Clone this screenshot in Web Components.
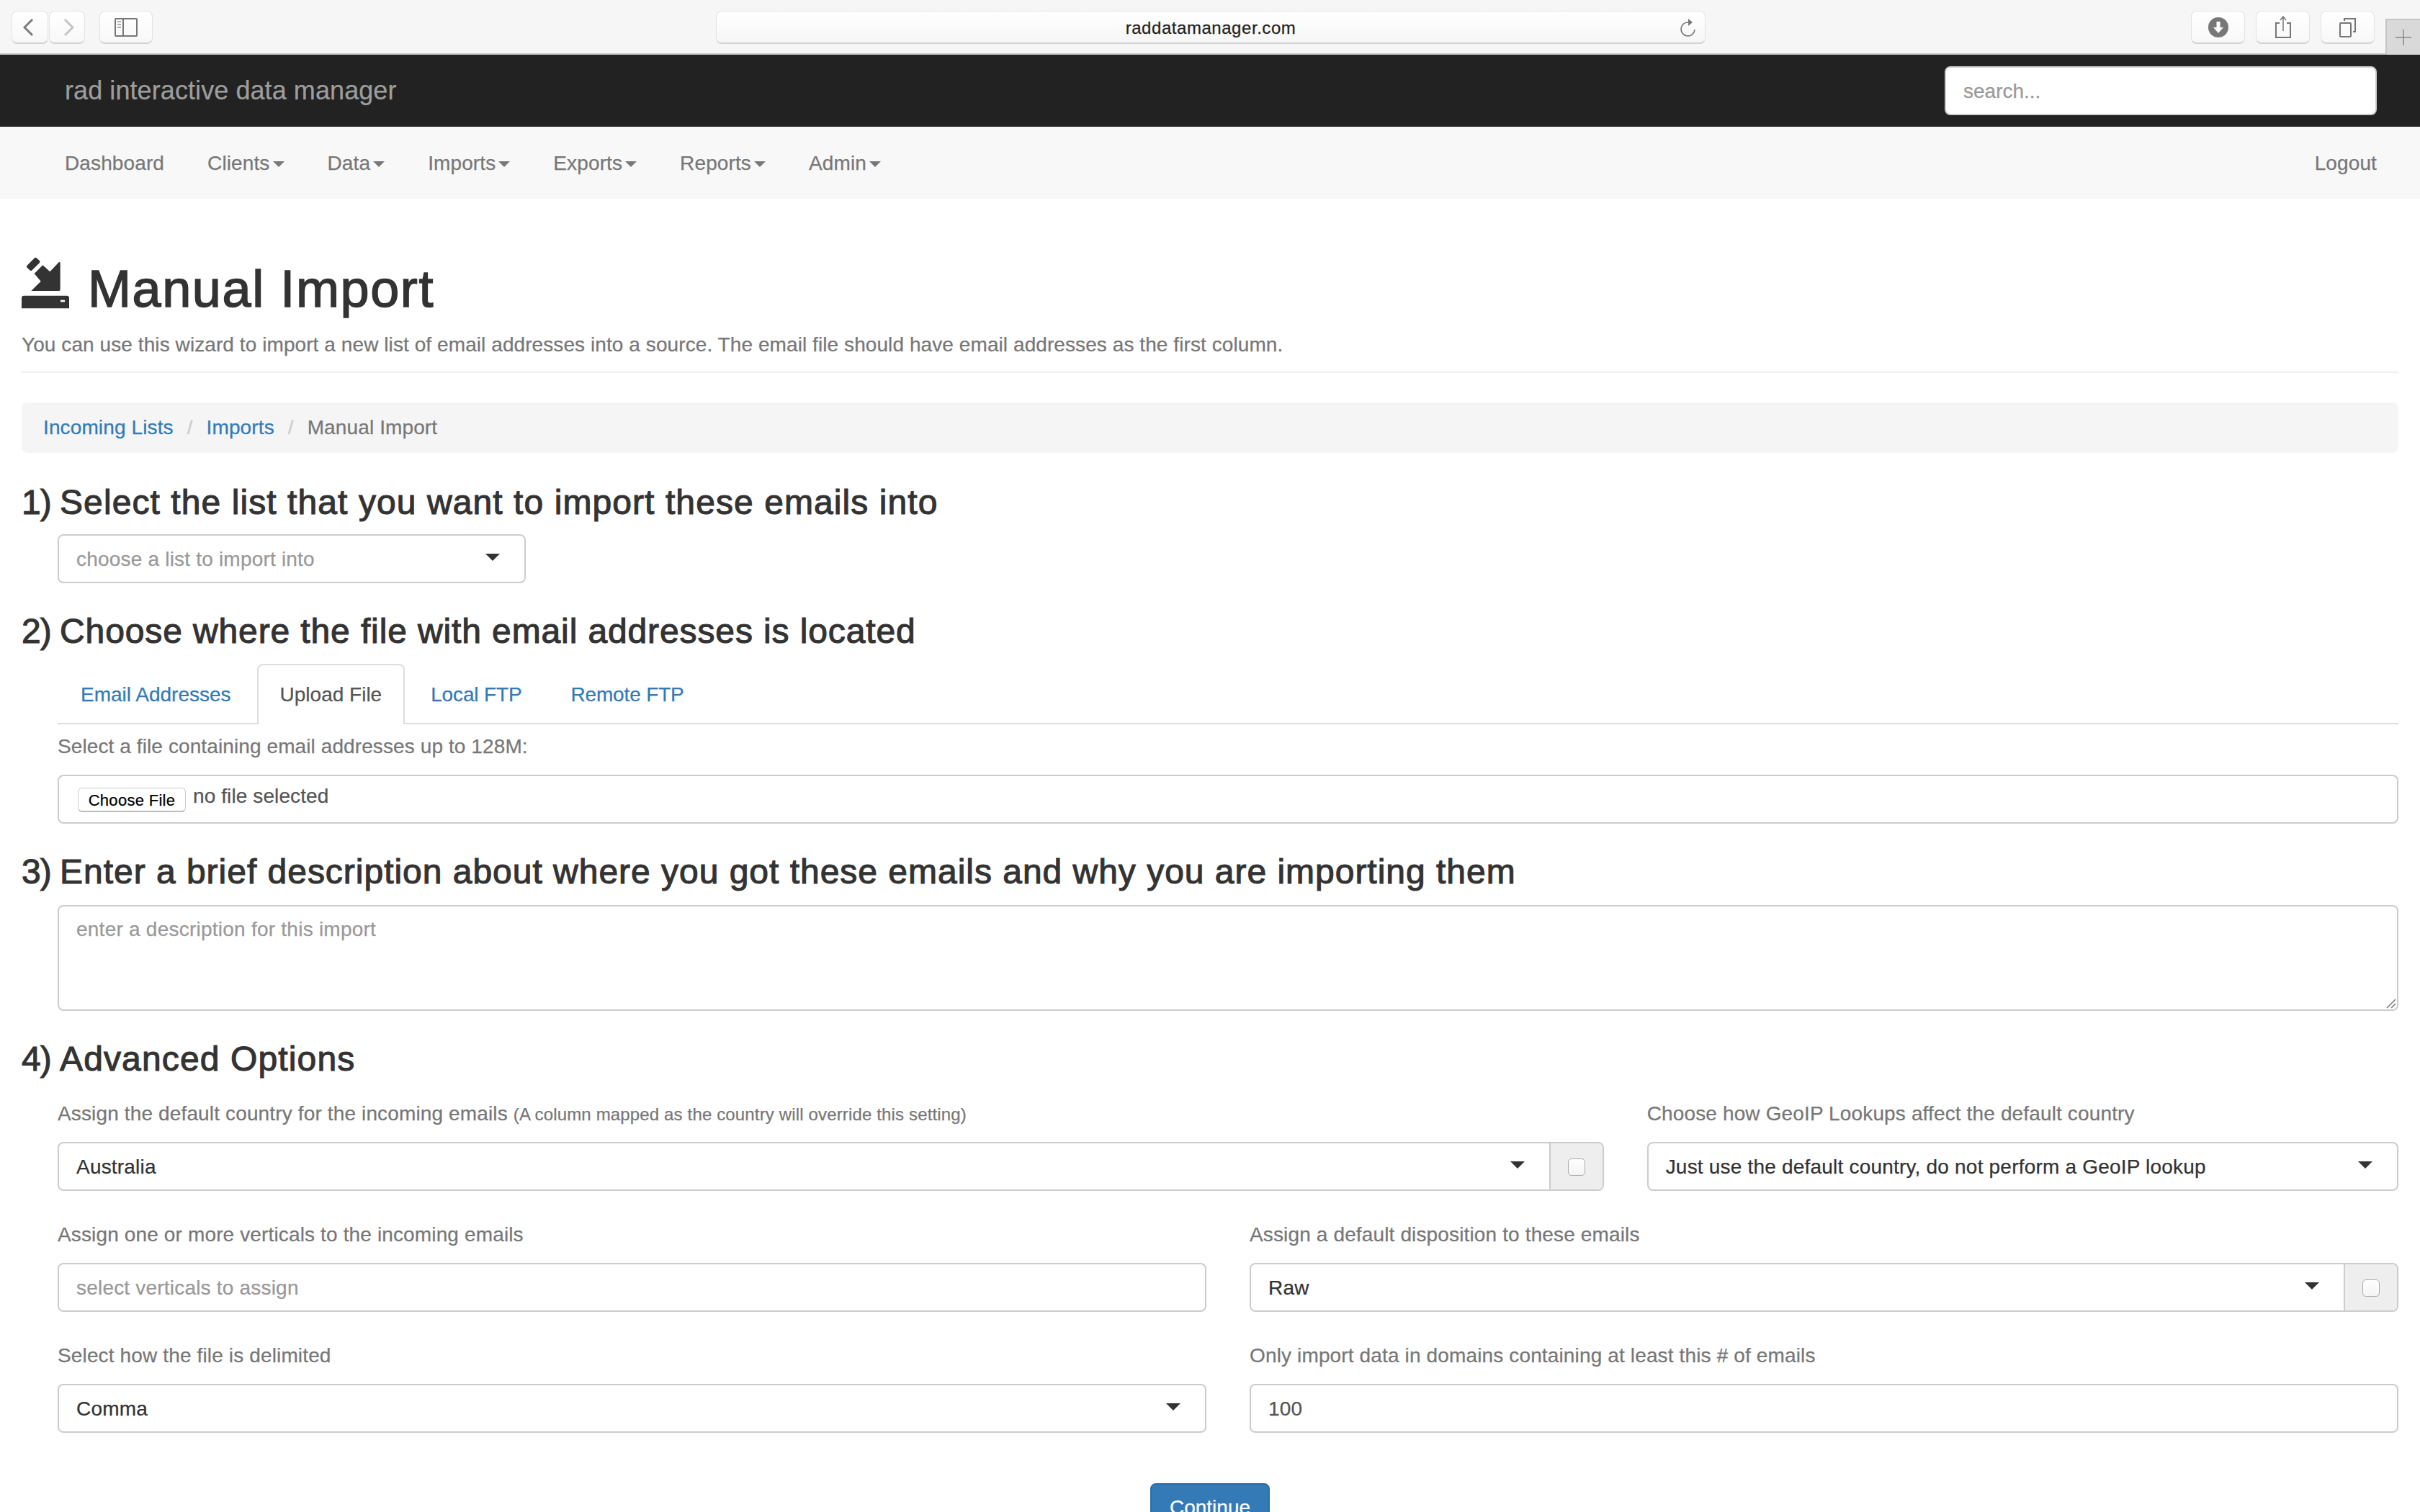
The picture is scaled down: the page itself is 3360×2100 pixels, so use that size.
<!DOCTYPE html>
<html>
<head>
<meta charset="utf-8">
<title>Manual Import</title>
<style>
html,body{margin:0;padding:0;height:2100px;overflow:hidden;background:#fff}
body{font:28px/40px "Liberation Sans",Arial,sans-serif;color:#333;-webkit-text-stroke-width:.25px}
.grid{display:grid;grid-template-columns:repeat(12,1fr);column-gap:60px;row-gap:40px;margin:29px 30px 0 80px}
.w8{grid-column:span 8}.w4{grid-column:span 4}.w6{grid-column:span 6}
small{font-size:24px;letter-spacing:.15px}
.n{letter-spacing:-1px}
</style>
</head>
<body>
<rad-browser-bar url="raddatamanager.com"></rad-browser-bar>
<rad-topbar brand="rad interactive data manager" placeholder="search..."></rad-topbar>
<rad-nav items="Dashboard,Clients*,Data*,Imports*,Exports*,Reports*,Admin*" right="Logout"></rad-nav>
<rad-page-head title="Manual Import">You can use this wizard to import a new list of email addresses into a source. The email file should have email addresses as the first column.</rad-page-head>
<rad-crumbs links="Incoming Lists,Imports" current="Manual Import"></rad-crumbs>

<rad-step gap="43" after="18" style="letter-spacing:1.08px"><span class="n">1) </span>Select the list that you want to import these emails into</rad-step>
<rad-select style="width:650px;margin-left:80px" placeholder="choose a list to import into"></rad-select>

<rad-step gap="41" after="19" style="letter-spacing:.88px"><span class="n">2) </span>Choose where the file with email addresses is located</rad-step>
<rad-tabs items="Email Addresses,Upload File,Local FTP,Remote FTP" active="1"></rad-tabs>
<rad-file label="Select a file containing email addresses up to 128M:" button="Choose File" empty="no file selected"></rad-file>

<rad-step gap="41" after="20" style="letter-spacing:.98px"><span class="n">3) </span>Enter a brief description about where you got these emails and why you are importing them</rad-step>
<rad-textarea placeholder="enter a description for this import"></rad-textarea>

<rad-step gap="41" after="0" style="letter-spacing:1.13px"><span class="n">4) </span>Advanced Options</rad-step>
<div class="grid">
  <rad-field class="w8">Assign the default country for the incoming emails <small slot="note">(A column mapped as the country will override this setting)</small><rad-select slot="control" value="Australia" addon></rad-select></rad-field>
  <rad-field class="w4">Choose how GeoIP Lookups affect the default country<rad-select slot="control" value="Just use the default country, do not perform a GeoIP lookup"></rad-select></rad-field>
  <rad-field class="w6">Assign one or more verticals to the incoming emails<rad-select slot="control" placeholder="select verticals to assign" nocaret></rad-select></rad-field>
  <rad-field class="w6">Assign a default disposition to these emails<rad-select slot="control" value="Raw" addon></rad-select></rad-field>
  <rad-field class="w6">Select how the file is delimited<rad-select slot="control" value="Comma"></rad-select></rad-field>
  <rad-field class="w6">Only import data in domains containing at least this # of emails<rad-select slot="control" value="100" nocaret muted></rad-select></rad-field>
</div>
<rad-button>Continue</rad-button>

<script>
function shadow(el, html) {
  var root = el.attachShadow({ mode: 'open' });
  root.innerHTML = html;
  return root;
}

class RadBrowserBar extends HTMLElement {
  connectedCallback() {
    shadow(this, '<style>\
:host{display:flex;height:74px;background:#f6f6f6;border-bottom:2px solid #c8c8c8;position:relative}\
.btn{box-sizing:border-box;height:46px;margin-top:15px;background:linear-gradient(#fff,#f8f8f8);border:1px solid #e2e2e2;border-bottom:2px solid #d2d2d2;border-radius:8px;display:flex;align-items:center;justify-content:center;flex:none}\
.url{box-sizing:border-box;width:1374px;height:46px;margin:15px 0 0 782px;background:linear-gradient(#fff,#f6f6f6);border:1px solid #e2e2e2;border-bottom:2px solid #d2d2d2;border-radius:8px;display:flex;align-items:center;justify-content:center;position:relative;font:24px/30px "Liberation Sans",Arial,sans-serif;letter-spacing:.55px;color:#222;padding-top:2px}\
.url svg{position:absolute;right:10px;top:9px}\
.plus{position:absolute;right:0;top:26px;width:46px;height:48px;background:#d9d9d9;border:solid #c4c4c4;border-width:2px 0 0 2px;display:flex;align-items:center;justify-content:center}\
</style>\
<div class="btn" style="width:51px;margin-left:16px"><svg width="20" height="28" viewBox="0 0 20 28"><path d="M13 3 2 14l11 11" fill="none" stroke="#7c7c7c" stroke-width="3"/></svg></div>\
<div class="btn" style="width:50px;margin-left:1px"><svg width="20" height="28" viewBox="0 0 20 28"><path d="M7 3l11 11L7 25" fill="none" stroke="#c4c4c4" stroke-width="3"/></svg></div>\
<div class="btn" style="width:74px;margin-left:20px"><svg width="32" height="26" viewBox="0 0 32 26"><rect x="1" y="1" width="30" height="24" rx="1" fill="none" stroke="#777" stroke-width="2"/><path d="M12 1v24" stroke="#777" stroke-width="2"/><path d="M4 5h5M4 9h5M4 13h5" stroke="#aaa" stroke-width="2"/></svg></div>\
<div class="url">' + this.getAttribute('url') + '<svg width="26" height="28" viewBox="0 0 26 28"><path d="M13 6a9.5 9.5 0 1 0 9 10" fill="none" stroke="#777" stroke-width="1.6"/><path d="M13 1l6 5-6 5z" fill="#777"/></svg></div>\
<div class="btn" style="width:75px;margin-left:674px"><svg width="30" height="30" viewBox="0 0 30 30"><circle cx="15" cy="15" r="14" fill="#777"/><path d="M12.500 7h5v8h4.500L15 23l-7-8h4.500z" fill="#fff"/></svg></div>\
<div class="btn" style="width:75px;margin-left:15px"><svg width="26" height="32" viewBox="0 0 26 32"><path d="M8 10H3v20h20V10h-5" fill="none" stroke="#777" stroke-width="2"/><path d="M13 1v20M9 6l4-5 4 5" fill="none" stroke="#777" stroke-width="1.500"/></svg></div>\
<div class="btn" style="width:75px;margin-left:15px"><svg width="26" height="28" viewBox="0 0 26 28"><rect x="2" y="8" width="15" height="19" rx="1" fill="none" stroke="#777" stroke-width="2"/><path d="M8 5V2h15v18h-3" fill="none" stroke="#777" stroke-width="2"/></svg></div>\
<div class="plus"><svg width="24" height="24" viewBox="0 0 24 24"><path d="M12 1v22M1 12h22" stroke="#888" stroke-width="1.500"/></svg></div>');
  }
}

class RadTopbar extends HTMLElement {
  connectedCallback() {
    shadow(this, '<style>\
:host{display:flex;height:100px;background:#222;padding:0 60px 0 90px;align-items:center;justify-content:space-between}\
.brand{font-size:36px;line-height:40px;color:#9d9d9d;letter-spacing:.08px}\
.search{box-sizing:border-box;width:600px;height:68px;background:#fff;border:2px solid #ccc;border-radius:8px;padding:0 24px;line-height:65px;font-size:28px;color:#999}\
</style><div class="brand">' + this.getAttribute('brand') + '</div><div class="search">' + this.getAttribute('placeholder') + '</div>');
  }
}

class RadNav extends HTMLElement {
  connectedCallback() {
    var links = this.getAttribute('items').split(',').map(function (t) {
      var drop = t.slice(-1) === '*';
      return '<a>' + t.replace('*', '') + (drop ? '<i></i>' : '') + '</a>';
    }).join('');
    shadow(this, '<style>\
:host{display:flex;box-sizing:border-box;height:100px;background:#f8f8f8;padding:1px 60px 0 60px;align-items:center;justify-content:space-between;color:#777;font-size:28px;line-height:40px;letter-spacing:.12px}\
.left{display:flex}\
a{padding:0 30px;display:flex;align-items:center}\
i{width:0;height:0;margin-left:4px;margin-top:2px;border-top:8px solid #777;border-left:8px solid transparent;border-right:8px solid transparent}\
.right{padding:0}\
</style><div class="left">' + links + '</div><div class="right">' + this.getAttribute('right') + '</div>');
  }
}

class RadPageHead extends HTMLElement {
  connectedCallback() {
    shadow(this, '<style>\
:host{display:block;margin:85px 30px 0}\
.title{display:flex;height:80px;align-items:flex-start}\
svg{flex:none;margin-top:-4px;width:66px;height:72px}\
h1{margin:0 0 0 26px;font-size:72px;line-height:80px;font-weight:400;color:#333;letter-spacing:1.6px;-webkit-text-stroke:1.5px #333}\
p{margin:18px 0 0;color:#777;font-size:28px;line-height:40px;letter-spacing:.08px}\
hr{border:0;height:2px;background:#eee;margin:17px 0 0}\
</style><div class="title"><svg viewBox="90 80 198 214"><path d="M112 115 145 82 Q150 80 154 84L165 95Q167 100 165 103L132 135Q127 137 123 133L112 122Q110 118 112 115Z" fill="#333"/><path d="M143 148 178 113 208 140 245 101Q250 98 251 104V214Q251 220 245 220H130L170 180Z" fill="#333"/><path d="M90 250Q90 240 100 240H278Q288 240 288 250V293H90Z" fill="#333"/><rect x="252" y="258" width="18" height="8" fill="#fff"/></svg>\
<h1>' + this.getAttribute('title') + '</h1></div><p><slot></slot></p><hr>');
  }
}

class RadCrumbs extends HTMLElement {
  connectedCallback() {
    var html = this.getAttribute('links').split(',').map(function (t) {
      return '<a>' + t + '</a><b>/</b>';
    }).join('');
    shadow(this, '<style>\
:host{display:flex;margin:41px 30px 0;height:70px;background:#f5f5f5;border-radius:8px;padding:0 30px;align-items:center;color:#777;font-size:28px;letter-spacing:.12px}\
a{color:#337ab7}\
b{font-weight:400;color:#ccc;padding:0 19px}\
</style>' + html + '<span>' + this.getAttribute('current') + '</span>');
  }
}

class RadStep extends HTMLElement {
  connectedCallback() {
    shadow(this, '<style>\
:host{display:block;margin:' + this.getAttribute('gap') + 'px 30px ' + this.getAttribute('after') + 'px;font-size:48px;line-height:52px;color:#333;letter-spacing:1px;-webkit-text-stroke:1.1px #333}\
</style><slot></slot>');
  }
}

class RadSelect extends HTMLElement {
  connectedCallback() {
    var ph = this.getAttribute('placeholder');
    var caret = this.hasAttribute('nocaret') ? '' : '<i></i>';
    var addon = this.hasAttribute('addon') ? '<div class="addon"><u></u></div>' : '';
    var color = ph ? '#999' : (this.hasAttribute('muted') ? '#555' : '#333');
    shadow(this, '<style>\
:host{display:flex;box-sizing:border-box;height:68px;background:#fff;border:2px solid #ccc;border-radius:8px;font-size:28px;line-height:66px;letter-spacing:.2px;color:' + color + ';overflow:hidden}\
.val{flex:1;padding:0 24px;white-space:nowrap}\
i{flex:none;align-self:center;margin:-4px 34px 0 0;border-top:10px solid #333;border-left:10px solid transparent;border-right:10px solid transparent}\
.addon{flex:none;width:72px;background:#eee;border-left:2px solid #ccc;display:flex;align-items:center;justify-content:center}\
u{display:block;box-sizing:border-box;width:24px;height:24px;background:linear-gradient(#fff,#f4f4f4);border:1px solid #aaa;border-radius:5px;margin-top:2px}\
</style><div class="val">' + (ph || this.getAttribute('value')) + '</div>' + caret + addon);
  }
}

class RadTabs extends HTMLElement {
  connectedCallback() {
    var active = +this.getAttribute('active');
    var html = this.getAttribute('items').split(',').map(function (t, i) {
      return '<a class="' + (i === active ? 'on' : '') + '">' + t + '</a>';
    }).join('');
    shadow(this, '<style>\
:host{display:flex;margin:0 30px 0 80px;height:84px;box-sizing:border-box;border-bottom:2px solid #ddd;font-size:28px;line-height:40px}\
a{box-sizing:border-box;height:84px;padding:21px 30px 19px;margin-right:4px;border:2px solid transparent;border-bottom:0;border-radius:8px 8px 0 0;color:#337ab7}\
a:nth-of-type(n+3){letter-spacing:-.15px}\
a.on{color:#555;background:#fff;border-color:#ddd}\
</style>' + html);
  }
}

class RadFile extends HTMLElement {
  connectedCallback() {
    shadow(this, '<style>\
:host{display:block;margin:11px 30px 0 80px;font-size:28px;line-height:40px;color:#777;letter-spacing:.1px}\
.box{box-sizing:border-box;height:68px;margin-top:19px;background:#fff;border:2px solid #ccc;border-radius:8px;display:flex;align-items:flex-start;padding:16px 0 0 26px;color:#555}\
.pick{box-sizing:border-box;width:150px;height:34px;background:#fff;border:1px solid #ccc;border-bottom:2px solid #bbb;border-radius:6px;color:#000;font-size:22px;line-height:33px;letter-spacing:.3px;text-align:center;margin-right:10px}\
.txt{margin-top:-8px}\
</style><div>' + this.getAttribute('label') + '</div><div class="box"><div class="pick">' + this.getAttribute('button') + '</div><div class="txt">' + this.getAttribute('empty') + '</div></div>');
  }
}

class RadTextarea extends HTMLElement {
  connectedCallback() {
    shadow(this, '<style>\
:host{display:block;box-sizing:border-box;margin:0 30px 0 80px;height:147px;background:#fff;border:2px solid #ccc;border-radius:8px;padding:12px 24px;font-size:28px;line-height:40px;letter-spacing:.24px;color:#999;position:relative}\
svg{position:absolute;right:1px;bottom:1px}\
</style>' + this.getAttribute('placeholder') + '<svg width="16" height="16" viewBox="0 0 16 16"><path d="M15 3 3 15M15 9l-6 6" stroke="#777" stroke-width="1.500"/></svg>');
  }
}

class RadField extends HTMLElement {
  connectedCallback() {
    shadow(this, '<style>\
:host{display:block;font-size:28px;line-height:40px;color:#777;letter-spacing:.14px}\
.label{box-sizing:border-box;height:40px;padding-top:1px;margin-bottom:20px;white-space:nowrap}\
</style><div class="label"><slot></slot><slot name="note"></slot></div><slot name="control"></slot>');
  }
}

class RadButton extends HTMLElement {
  connectedCallback() {
    shadow(this, '<style>\
:host{display:block;box-sizing:border-box;width:166px;height:68px;margin:70px 0 0 1597px;background:#337ab7;border:2px solid #2e6da4;border-radius:8px;color:#fff;font-size:28px;line-height:64px;text-align:center}\
</style><slot></slot>');
  }
}

customElements.define('rad-browser-bar', RadBrowserBar);
customElements.define('rad-topbar', RadTopbar);
customElements.define('rad-nav', RadNav);
customElements.define('rad-page-head', RadPageHead);
customElements.define('rad-crumbs', RadCrumbs);
customElements.define('rad-step', RadStep);
customElements.define('rad-select', RadSelect);
customElements.define('rad-tabs', RadTabs);
customElements.define('rad-file', RadFile);
customElements.define('rad-textarea', RadTextarea);
customElements.define('rad-field', RadField);
customElements.define('rad-button', RadButton);
</script>
</body>
</html>
